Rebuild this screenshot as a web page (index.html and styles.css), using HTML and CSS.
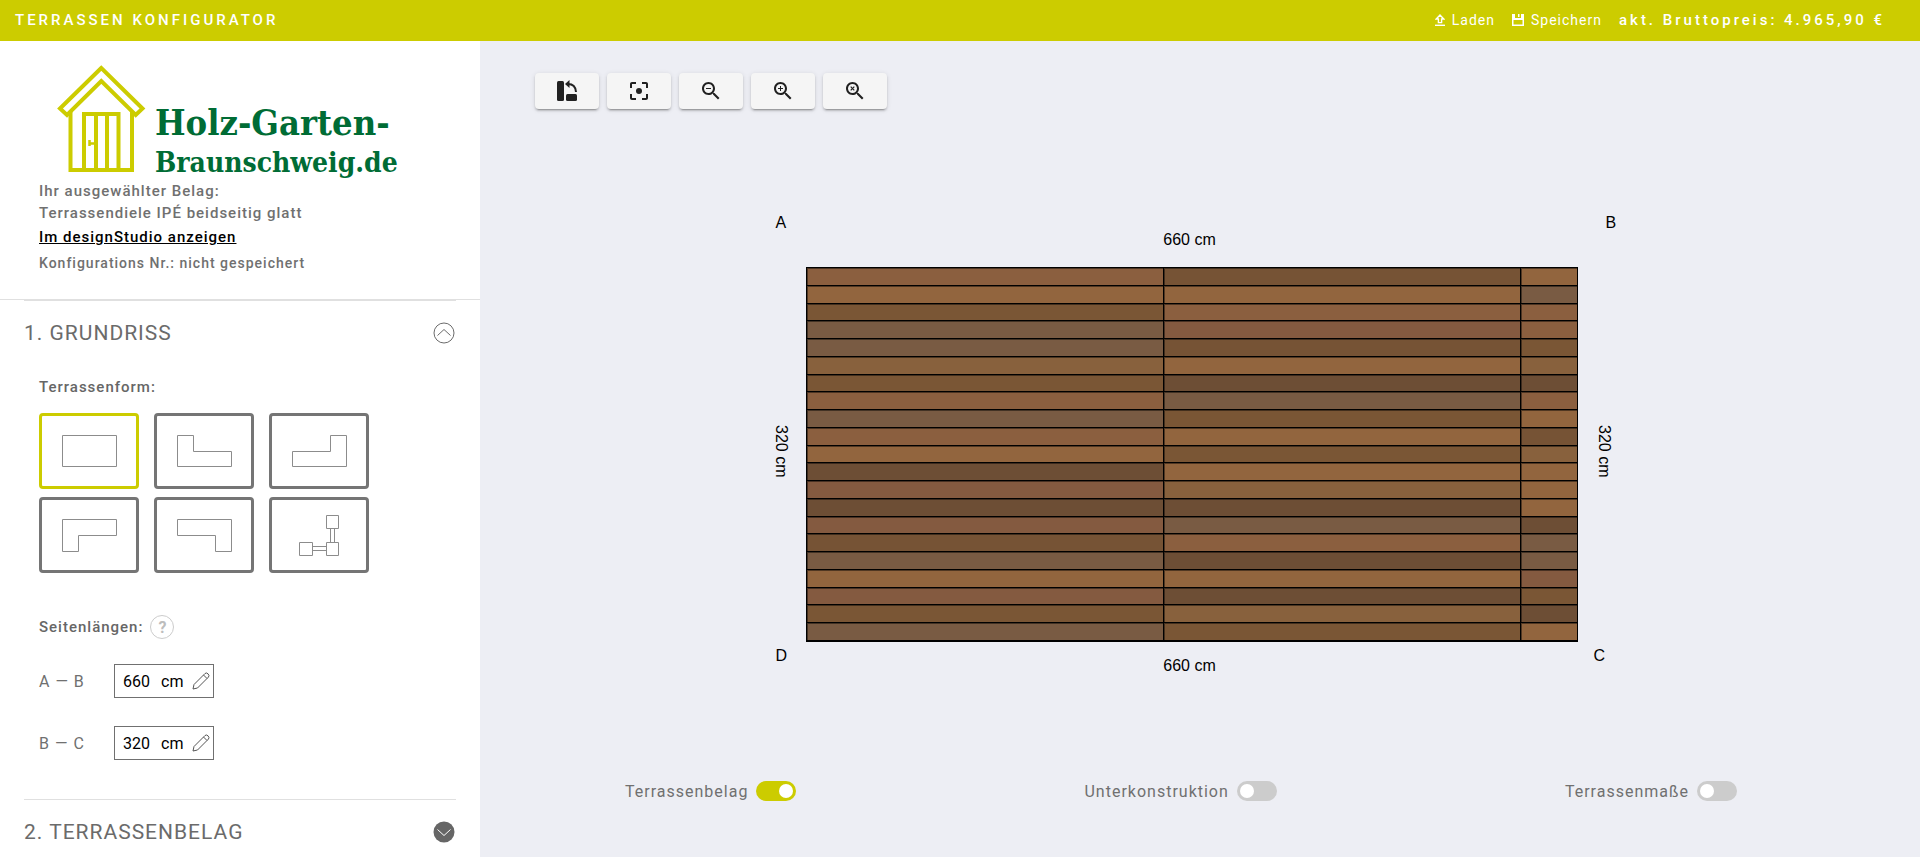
FILE: index.html
```html
<!DOCTYPE html>
<html lang="de">
<head>
<meta charset="utf-8">
<title>Terrassen Konfigurator</title>
<meta name="viewport" content="width=device-width, initial-scale=1">
<link rel="stylesheet" href="styles.css">
</head>
<body>
<header class="topbar">
  <h1 class="topbar-title">TERRASSEN KONFIGURATOR</h1>
  <div class="topbar-right">
    <button class="topbar-btn" type="button">
      <svg class="icon-load" viewBox="0 0 10 12" aria-hidden="true"><path d="M5 1 1.2 5H3.4V8.6H6.6V5H8.8Z" fill="none" stroke="currentColor" stroke-width="1.4"/><path d="M0 11.3H10" stroke="currentColor" stroke-width="1.4"/></svg>
      Laden
    </button>
    <button class="topbar-btn" type="button">
      <svg class="icon-save" viewBox="0 0 12 12" aria-hidden="true"><path fill="currentColor" fill-rule="evenodd" d="M0 0H3V4H9V0H12V12H0ZM1.5 6V10.5H10.5V6Z"/><path fill="currentColor" d="M6 0H7.5V3H6Z"/></svg>
      Speichern
    </button>
    <p class="price">akt. Bruttopreis: 4.965,90 €</p>
  </div>
</header>

<div class="layout">
  <aside class="sidebar">
    <div class="intro">
      <svg class="logo" viewBox="0 0 370 116" role="img" aria-label="Holz-Garten-Braunschweig.de">
        <g fill="none" stroke="#cccc00" stroke-width="4">
          <path d="M62.300 4 21 44.500 28 51 62.300 17 96.700 51 103.500 44.500Z"/>
          <path d="M31.500 48V106H93V48"/>
          <path d="M45 106V50H79.500V106M57 50V106M68 50V106"/>
          <path d="M50.500 76V82M50 79.500H57" stroke-width="2.500"/>
        </g>
        <text class="logo-line1" x="116" y="71">Holz-Garten-</text>
        <text class="logo-line2" x="116" y="108">Braunschweig.de</text>
      </svg>
      <p class="intro-text">Ihr ausgewählter Belag:<br>Terrassendiele IPÉ beidseitig glatt</p>
      <a class="studio-link" href="#studio">Im designStudio anzeigen</a>
      <p class="config-no">Konfigurations Nr.: nicht gespeichert</p>
    </div>

    <section class="section">
      <button class="section-head" type="button" aria-expanded="true">
        <span>1. GRUNDRISS</span>
        <svg class="chevron" viewBox="0 0 22 22" fill="none" stroke="#6b6b6b" aria-hidden="true"><circle cx="11" cy="11" r="10"/><path d="M4.500 13.500 11 7.500 17.500 13.500"/></svg>
      </button>
      <div class="section-body">
        <h2 class="label">Terrassenform:</h2>
        <div class="shapes">
          <button class="shape shape-active" type="button" aria-label="Rechteck"><svg viewBox="0 0 94 70"><path d="M20.500 19.500H74.500V50.500H20.500Z"/></svg></button>
          <button class="shape" type="button" aria-label="L-Form links unten"><svg viewBox="0 0 94 70"><path d="M20.500 19.500H36.500V35.500H74.500V50.500H20.500Z"/></svg></button>
          <button class="shape" type="button" aria-label="L-Form rechts unten"><svg viewBox="0 0 94 70"><path d="M58.500 19.500H74.500V50.500H20.500V35.500H58.500Z"/></svg></button>
          <button class="shape" type="button" aria-label="L-Form links oben"><svg viewBox="0 0 94 70"><path d="M20.500 19.500H74.500V35.500H36.500V51.500H20.500Z"/></svg></button>
          <button class="shape" type="button" aria-label="L-Form rechts oben"><svg viewBox="0 0 94 70"><path d="M20.500 19.500H74.500V51.500H58.500V35.500H20.500Z"/></svg></button>
          <button class="shape" type="button" aria-label="Freie Form"><svg viewBox="0 0 94 70"><path d="M54.500 15.500h12v13h-12ZM54.500 42.500h12v13h-12ZM27.500 42.500h13v13h-13ZM58.500 28.500v14M62.500 28.500v14M40.500 46.500h14M40.500 50.500h14"/></svg></button>
        </div>
        <div class="label-row">
          <h2 class="label">Seitenlängen:</h2>
          <button class="help" type="button" aria-label="Hilfe">?</button>
        </div>
        <div class="side">
          <label class="side-name" for="side-ab">A — B</label>
          <span class="side-field">
            <input class="side-input" id="side-ab" type="text" value="660"><span class="unit">cm</span>
            <svg class="pencil" viewBox="0 0 18 18" aria-hidden="true"><path d="M1 17 2 12.500 13 1.500Q14.500 .300 16 1.800 17.700 3.500 16.500 5L5.500 16ZM11.500 3 15 6.500"/></svg>
          </span>
        </div>
        <div class="side">
          <label class="side-name" for="side-bc">B — C</label>
          <span class="side-field">
            <input class="side-input" id="side-bc" type="text" value="320"><span class="unit">cm</span>
            <svg class="pencil" viewBox="0 0 18 18" aria-hidden="true"><path d="M1 17 2 12.500 13 1.500Q14.500 .300 16 1.800 17.700 3.500 16.500 5L5.500 16ZM11.500 3 15 6.500"/></svg>
          </span>
        </div>
      </div>
    </section>

    <section class="section">
      <button class="section-head" type="button" aria-expanded="false">
        <span>2. TERRASSENBELAG</span>
        <svg class="chevron" viewBox="0 0 22 22" fill="none" aria-hidden="true"><circle cx="11" cy="11" r="10.500" fill="#666"/><path d="M4.500 8.500 11 14.500 17.500 8.500" stroke="#fff"/></svg>
      </button>
    </section>
  </aside>

  <main class="stage">
    <div class="toolbar">
      <button class="tool" type="button" aria-label="Drehen"><svg viewBox="0 0 24 24"><rect x="2" y="2" width="7" height="20" rx="1.500"/><rect x="11" y="15" width="11" height="7" rx="1.500"/><path d="M10 5 14.500 1V9Z"/><path d="M13 5Q20.500 5 21 13" fill="none" stroke="#212121" stroke-width="2"/></svg></button>
      <button class="tool" type="button" aria-label="Zentrieren"><svg viewBox="0 0 24 24"><path d="M5 15H3v4c0 1.100.9 2 2 2h4v-2H5v-4zM5 5h4V3H5c-1.100 0-2 .9-2 2v4h2V5zM19 3h-4v2h4v4h2V5c0-1.100-.9-2-2-2zM19 19h-4v2h4c1.100 0 2-.9 2-2v-4h-2v4zM12 9a3 3 0 1 0 0 6 3 3 0 0 0 0-6z"/></svg></button>
      <button class="tool" type="button" aria-label="Verkleinern"><svg viewBox="0 0 24 24"><path d="M15.500 14h-.79l-.28-.27C15.410 12.590 16 11.110 16 9.500 16 5.910 13.090 3 9.500 3S3 5.910 3 9.500 5.910 16 9.500 16c1.610 0 3.090-.59 4.230-1.570l.27.28v.79l5 4.990L20.490 19l-4.990-5zm-6 0C7.010 14 5 11.990 5 9.500S7.010 5 9.500 5 14 7.010 14 9.500 11.990 14 9.500 14zM7 9h5v1H7z"/></svg></button>
      <button class="tool" type="button" aria-label="Vergrößern"><svg viewBox="0 0 24 24"><path d="M15.500 14h-.79l-.28-.27C15.410 12.590 16 11.110 16 9.500 16 5.910 13.090 3 9.500 3S3 5.910 3 9.500 5.910 16 9.500 16c1.610 0 3.090-.59 4.230-1.570l.27.28v.79l5 4.990L20.490 19l-4.990-5zm-6 0C7.010 14 5 11.990 5 9.500S7.010 5 9.500 5 14 7.010 14 9.500 11.990 14 9.500 14zM12 10h-2v2H9v-2H7V9h2V7h1v2h2v1z"/></svg></button>
      <button class="tool" type="button" aria-label="Zoom zurücksetzen"><svg viewBox="0 0 24 24"><path d="M15.500 14h-.79l-.28-.27C15.410 12.590 16 11.110 16 9.500 16 5.910 13.090 3 9.500 3S3 5.910 3 9.500 5.910 16 9.500 16c1.610 0 3.090-.59 4.230-1.570l.27.28v.79l5 4.990L20.490 19l-4.990-5zm-6 0C7.010 14 5 11.990 5 9.500S7.010 5 9.500 5 14 7.010 14 9.500 11.990 14 9.500 14z"/><path d="M7.700 7.700 11.300 11.300M11.300 7.700 7.700 11.300" fill="none" stroke="#212121" stroke-width="1.200"/></svg></button>
    </div>

    <div class="plan">
      <span class="corner corner-a">A</span>
      <span class="length length-top">660 cm</span>
      <span class="corner corner-b">B</span>
      <span class="length length-left">320 cm</span>
      <div class="deck">
        <i class="w1"></i><i class="w8"></i><i class="w2"></i>
        <i class="w2"></i><i class="w2"></i><i class="w4"></i>
        <i class="w3"></i><i class="w1"></i><i class="w1"></i>
        <i class="w4"></i><i class="w7"></i><i class="w1"></i>
        <i class="w4"></i><i class="w8"></i><i class="w3"></i>
        <i class="w5"></i><i class="w2"></i><i class="w5"></i>
        <i class="w3"></i><i class="w6"></i><i class="w6"></i>
        <i class="w1"></i><i class="w4"></i><i class="w1"></i>
        <i class="w4"></i><i class="w3"></i><i class="w2"></i>
        <i class="w1"></i><i class="w2"></i><i class="w8"></i>
        <i class="w2"></i><i class="w3"></i><i class="w5"></i>
        <i class="w6"></i><i class="w2"></i><i class="w2"></i>
        <i class="w7"></i><i class="w5"></i><i class="w2"></i>
        <i class="w6"></i><i class="w6"></i><i class="w2"></i>
        <i class="w7"></i><i class="w4"></i><i class="w6"></i>
        <i class="w8"></i><i class="w1"></i><i class="w4"></i>
        <i class="w4"></i><i class="w6"></i><i class="w4"></i>
        <i class="w2"></i><i class="w2"></i><i class="w7"></i>
        <i class="w7"></i><i class="w6"></i><i class="w3"></i>
        <i class="w3"></i><i class="w5"></i><i class="w6"></i>
        <i class="w4"></i><i class="w3"></i><i class="w2"></i>
      </div>
      <span class="length length-right">320 cm</span>
      <span class="corner corner-d">D</span>
      <span class="length length-bottom">660 cm</span>
      <span class="corner corner-c">C</span>
    </div>

    <div class="toggles">
      <label class="toggle">Terrassenbelag<input class="switch" type="checkbox" checked></label>
      <label class="toggle">Unterkonstruktion<input class="switch" type="checkbox"></label>
      <label class="toggle">Terrassenmaße<input class="switch" type="checkbox"></label>
    </div>
  </main>
</div>
</body>
</html>
```
FILE: styles.css
```css
* { box-sizing: border-box; }

body {
  display: flex;
  flex-direction: column;
  height: 100vh;
  margin: 0;
  overflow: hidden;
  background: #fff;
  color: #707070;
  font-family: Roboto, "Liberation Sans", sans-serif;
  font-size: 14px;
}

h1, h2, p { margin: 0; }

button {
  padding: 0;
  border: 0;
  background: none;
  color: inherit;
  font: inherit;
  cursor: pointer;
}

/* Top bar */
.topbar {
  display: flex;
  flex: none;
  align-items: center;
  justify-content: space-between;
  height: 41px;
  padding: 0 35px 2px 15px;
  background: #cccc00;
  color: #fff;
}

.topbar-title {
  font-size: 15px;
  font-weight: 500;
  letter-spacing: 3px;
}

.topbar-right {
  display: flex;
  align-items: center;
  gap: 17px;
}

.topbar-btn {
  display: flex;
  align-items: center;
  gap: 7px;
  letter-spacing: 1px;
}

.icon-load { width: 10px; height: 12px; }
.icon-save { width: 12px; height: 12px; }

.price {
  font-size: 15px;
  font-weight: 500;
  letter-spacing: 3px;
}

/* Sidebar */
.layout {
  display: flex;
  flex: 1;
  min-height: 0;
}

.sidebar {
  flex: none;
  width: 25%;
  min-width: 420px;
  overflow: hidden;
}

.intro {
  padding: 23px 0 24px 39px;
  border-bottom: 1px solid #e0e0e0;
  font-size: 15px;
  font-weight: 500;
  letter-spacing: 1px;
}

.logo {
  display: block;
  width: 370px;
  height: 116px;
}

.logo-line1,
.logo-line2 {
  fill: #006c35;
  font-family: "DejaVu Serif Condensed", "DejaVu Serif", serif;
  font-weight: 700;
  letter-spacing: 0;
}

.logo-line1 { font-size: 36px; }
.logo-line2 { font-size: 28px; }

.intro-text { line-height: 22px; }

.studio-link {
  display: block;
  width: fit-content;
  margin-top: 1px;
  color: #000;
  line-height: 24px;
}

.config-no {
  margin-top: 2px;
  font-size: 14px;
  line-height: 24px;
}

.section {
  margin: 0 24px;
  border-top: 1px solid #e0e0e0;
}

.section-head {
  display: flex;
  align-items: center;
  justify-content: space-between;
  width: 100%;
  height: 64px;
  padding-right: 1px;
  color: #6b6b6b;
  font-size: 21px;
  letter-spacing: 1px;
}

.chevron { width: 22px; height: 22px; }

.section-body { padding: 13px 15px 39px; }

.label {
  color: #666;
  font-size: 15px;
  font-weight: 500;
  line-height: 18px;
  letter-spacing: 1px;
}

.shapes {
  display: grid;
  grid-template-columns: repeat(3, 100px);
  gap: 8px 15px;
  margin: 17px 0 42px;
}

.shape {
  height: 76px;
  border: 3px solid #757575;
  border-radius: 4px;
}

.shape-active { border-color: #cccc00; }

.shape svg {
  display: block;
  width: 94px;
  height: 70px;
  fill: none;
  stroke: #8c8c8c;
}

.label-row {
  display: flex;
  align-items: center;
  gap: 7px;
}

.help {
  width: 24px;
  height: 24px;
  border: 1px solid #ccc;
  border-radius: 50%;
  color: #bdbdbd;
  font-size: 16px;
  font-weight: 700;
}

.side {
  display: flex;
  align-items: center;
  margin-top: 28px;
}

.label-row + .side { margin-top: 25px; }

.side-name {
  width: 75px;
  font-size: 16px;
  letter-spacing: 1px;
}

.side-field {
  display: flex;
  align-items: center;
  width: 100px;
  height: 34px;
  padding: 0 3px 0 8px;
  border: 1px solid #707070;
  color: #000;
  font-size: 16px;
}

.side-input {
  width: 38px;
  padding: 0;
  border: 0;
  outline: 0;
  background: none;
  color: inherit;
  font: inherit;
}

.pencil {
  width: 18px;
  height: 18px;
  margin-left: auto;
  fill: none;
  stroke: #555;
}

/* Drawing area */
.stage {
  display: flex;
  flex: 1;
  flex-direction: column;
  min-width: 0;
  background: #edeef4;
}

.toolbar {
  display: flex;
  gap: 8px;
  padding: 32px 55px 0;
}

.tool {
  display: grid;
  place-items: center;
  width: 64px;
  height: 36px;
  border-radius: 4px;
  background: #f5f5f5;
  box-shadow: 0 3px 1px -2px rgba(0, 0, 0, .2), 0 2px 2px 0 rgba(0, 0, 0, .14), 0 1px 5px 0 rgba(0, 0, 0, .12);
}

.tool svg {
  width: 24px;
  height: 24px;
  fill: #212121;
}

.plan {
  display: grid;
  grid-template-columns: 30px 1fr 47px;
  grid-template-rows: 54px auto 54px;
  width: 100%;
  max-width: 849px;
  margin: 104px auto 0;
  color: #000;
  font-family: "Liberation Sans", Arial, sans-serif;
  font-size: 16px;
  line-height: 20px;
}

.length { justify-self: center; }

.length-top {
  align-self: end;
  padding: 0 4px 17px 0;
}

.length-bottom { padding: 14px 4px 0 0; }

.length-left,
.length-right {
  align-self: center;
  justify-self: start;
  padding-bottom: 6px;
  writing-mode: vertical-rl;
}

.length-left { margin-left: -5px; }
.length-right { margin-left: 16px; }

.corner-b { padding-left: 28px; }
.corner-c { padding: 4px 0 0 16px; }
.corner-d { padding-top: 4px; }

.deck {
  display: grid;
  grid-template-columns: 356fr 356fr 56fr;
  grid-template-rows: repeat(21, 1fr);
  gap: 1px;
  aspect-ratio: 772 / 375;
  padding: 1px 1px 2px;
  background: #000;
}

.deck i { box-shadow: inset 1px 1px rgba(0, 0, 0, .45); }

.w1 { background: #8b5f3f; }
.w2 { background: #92653e; }
.w3 { background: #7a5635; }
.w4 { background: #795b43; }
.w5 { background: #88613d; }
.w6 { background: #6d4e35; }
.w7 { background: #845a40; }
.w8 { background: #765335; }

.toggles {
  display: flex;
  justify-content: space-between;
  margin-top: auto;
  padding: 0 183px 56px 145px;
}

.toggle {
  display: flex;
  align-items: center;
  gap: 8px;
  font-size: 16px;
  letter-spacing: 1px;
}

.switch {
  appearance: none;
  width: 40px;
  height: 20px;
  margin: 0;
  padding: 3px;
  border-radius: 10px;
  background: #ccc;
}

.switch::before {
  display: block;
  width: 14px;
  height: 14px;
  border-radius: 50%;
  background: #fff;
  content: "";
}

.switch:checked { background: #cccc00; }
.switch:checked::before { margin-left: auto; }
```
